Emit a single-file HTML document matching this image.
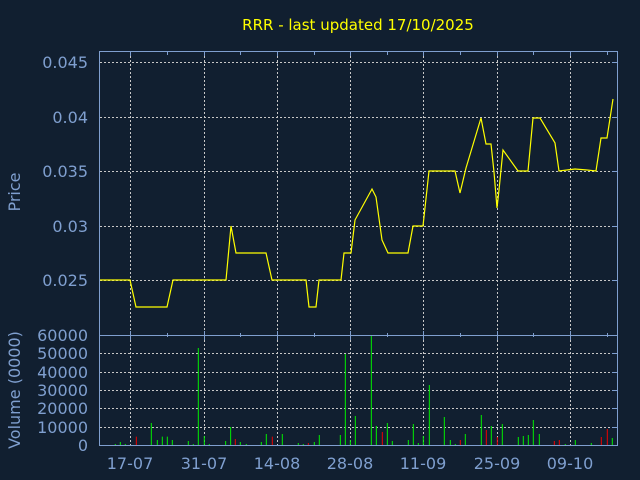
<!DOCTYPE html>
<html><head><meta charset="utf-8"><style>
html,body{margin:0;padding:0;background:#111f30;width:640px;height:480px;overflow:hidden}
svg{display:block}
text{font-family:"DejaVu Sans","Liberation Sans",sans-serif}
</style></head><body>
<svg width="640" height="480" viewBox="0 0 640 480" xmlns="http://www.w3.org/2000/svg">
<rect width="640" height="480" fill="#111f30"/>
<text x="358" y="30" fill="#ffff00" font-size="15" text-anchor="middle">RRR - last updated 17/10/2025</text>
<!-- grid -->
<g stroke="#c8c8c8" stroke-width="1" stroke-dasharray="2,2" fill="none">
<line x1="100" y1="62.5" x2="617" y2="62.5"/>
<line x1="100" y1="117.5" x2="617" y2="117.5"/>
<line x1="100" y1="171.5" x2="617" y2="171.5"/>
<line x1="100" y1="226.5" x2="617" y2="226.5"/>
<line x1="100" y1="280.5" x2="617" y2="280.5"/>
<line x1="100" y1="353.5" x2="617" y2="353.5"/>
<line x1="100" y1="372.5" x2="617" y2="372.5"/>
<line x1="100" y1="390.5" x2="617" y2="390.5"/>
<line x1="100" y1="408.5" x2="617" y2="408.5"/>
<line x1="100" y1="427.5" x2="617" y2="427.5"/>
<line x1="130.5" y1="52" x2="130.5" y2="445"/>
<line x1="204.5" y1="52" x2="204.5" y2="445"/>
<line x1="277.5" y1="52" x2="277.5" y2="445"/>
<line x1="350.5" y1="52" x2="350.5" y2="445"/>
<line x1="423.5" y1="52" x2="423.5" y2="445"/>
<line x1="497.5" y1="52" x2="497.5" y2="445"/>
<line x1="570.5" y1="52" x2="570.5" y2="445"/>
</g>
<!-- axes -->
<g stroke="#7f9fcf" stroke-width="1" fill="none">
<rect x="99.5" y="51.5" width="518" height="394"/>
<line x1="99.5" y1="335.5" x2="617.5" y2="335.5"/>
<path d="M130.5 52v4M167.5 52v3M204.5 52v4M240.5 52v3M277.5 52v4M314.5 52v3M350.5 52v4M387.5 52v3M423.5 52v4M460.5 52v3M497.5 52v4M533.5 52v3M570.5 52v4M607.5 52v3"/>
<path d="M130.5 331v9M167.5 333v4M204.5 331v9M240.5 333v4M277.5 331v9M314.5 333v4M350.5 331v9M387.5 333v4M423.5 331v9M460.5 333v4M497.5 331v9M533.5 333v4M570.5 331v9M607.5 333v4"/>
<path d="M612 62.5h5M612 117.5h5M612 171.5h5M612 226.5h5M612 280.5h5M612 353.5h5M612 372.5h5M612 390.5h5M612 408.5h5M612 427.5h5"/>
</g>
<!-- price line -->
<polyline fill="none" stroke="#ffff00" stroke-width="1.2" points="100,280 130,280 136,307 167,307 173,280 226,280 231,226 236,253 266,253 272,280 306,280 309,307 316,307 319,280 341,280 344,253 351,253 355,220 372,189 376,197 382,240 388,253 408,253 413,226 423,226 429,171 455,171 460,193 466,168 481,118 486,144 491,144 494,172 497,208 499,190 503,150 518,171 528,171 533,118 540,118 555,143 559,171 575,169 587,170 596,171 601,138 607,138 613,99"/>
<!-- volume bars zoom1 -->
<g transform="translate(0,300) scale(0.3333)" stroke-width="3" fill="none">
<path stroke="#00ee00" d="M346 435V432M361 435V426M376 435V432M454 435V369M472 435V420M487 435V410M502 435V410M517 435V420M565 435V423M580 435V432M595 435V144M613 435V408M628 435V432M677 435V423M692 435V381M721 435V426M739 435V432M784 435V426M799 435V402M847 435V402M895 435V429M910 435V432M943 435V426M958 435V405"/>
<path stroke="#ee0000" d="M409 435V410M706 435V417M817 435V410M925 435V429"/>
</g>
<g transform="translate(320,300) scale(0.3333)" stroke-width="3" fill="none">
<path stroke="#00ee00" d="M61 435V405M76 435V162M91 435V420M106 435V348M154 435V108M169 435V378M202 435V369M217 435V423M265 435V420M280 435V372M295 435V429M310 435V408M328 435V255M373 435V351M391 435V420M406 435V432M436 435V402M484 435V345M514 435V378M547 435V372M595 435V411M610 435V408M625 435V405M640 435V360M658 435V402M736 435V432M766 435V420M814 435V429M877 435V414"/>
<path stroke="#ee0000" d="M187 435V396M421 435V420M499 435V390M532 435V411M703 435V423M718 435V420M844 435V411M862 435V387"/>
</g>
<!-- labels -->
<g fill="#7f9fcf" font-size="16" text-anchor="end">
<text x="88" y="68">0.045</text>
<text x="88" y="123">0.04</text>
<text x="88" y="177">0.035</text>
<text x="88" y="232">0.03</text>
<text x="88" y="286">0.025</text>
<text x="88" y="341">60000</text>
<text x="88" y="359">50000</text>
<text x="88" y="378">40000</text>
<text x="88" y="396">30000</text>
<text x="88" y="414">20000</text>
<text x="88" y="433">10000</text>
<text x="88" y="451">0</text>
</g>
<g fill="#7f9fcf" font-size="16" text-anchor="middle">
<text x="130" y="469">17-07</text>
<text x="204" y="469">31-07</text>
<text x="277" y="469">14-08</text>
<text x="350" y="469">28-08</text>
<text x="423" y="469">11-09</text>
<text x="497" y="469">25-09</text>
<text x="570" y="469">09-10</text>
<text transform="translate(20,192) rotate(-90)">Price</text>
<text transform="translate(20,390) rotate(-90)">Volume (0000)</text>
</g>
</svg>
</body></html>
